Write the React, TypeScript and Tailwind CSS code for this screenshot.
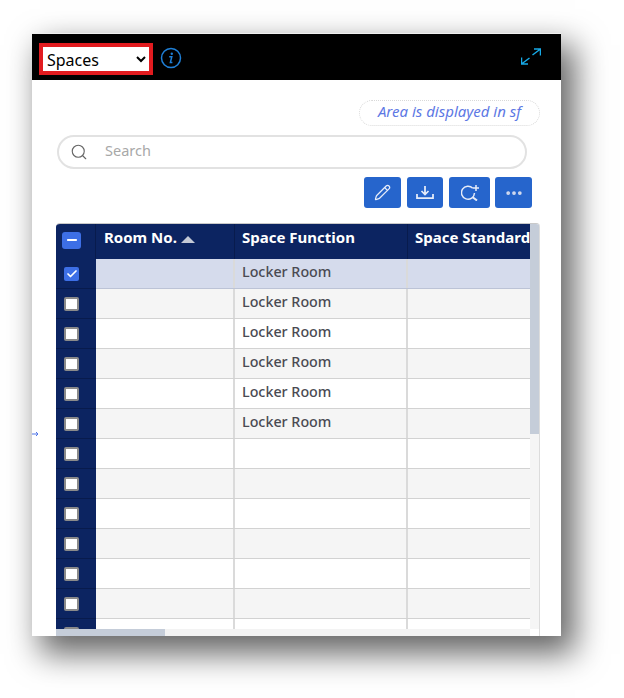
import { Pencil, MoreHorizontal, Search, Check, Minus } from "lucide-react";

const rows = ["Locker Room", "Locker Room", "Locker Room", "Locker Room", "Locker Room", "Locker Room", "", "", "", "", "", "", ""];

export default function App() {
  return (
    <div className="h-[698px] w-[624px] overflow-hidden bg-white pl-[32px] pt-[33px] font-['Noto_Sans',sans-serif]">
      <div className="relative flex h-[603px] w-[529px] flex-col border-t border-[#f0f0f0] bg-white shadow-[11px_15px_30px_3px_rgba(0,0,0,0.6)]">
        {/* Header */}
        <div className="flex h-[45.5px] shrink-0 items-start justify-between bg-black pl-[7px] pr-[20px] pt-[9px]">
          <div className="flex items-center gap-[7px]">
            <select className="h-[32px] w-[114px] border-4 border-[#e21b1f] bg-white pt-[1px] text-[16px] text-black">
              <option>Spaces</option>
            </select>
            <svg width="22" height="22" viewBox="0 0 22 22" fill="none" className="mb-[3px] text-[#1f7fd6]">
              <circle cx="11" cy="11" r="9.5" stroke="currentColor" strokeWidth="1.5" />
              <circle cx="11.8" cy="6.8" r="1.2" fill="currentColor" />
              <path d="M9.2 9.8h2.6l-1.4 5.6h2" stroke="currentColor" strokeWidth="1.5" />
            </svg>
          </div>
          <svg width="20" height="17" viewBox="0 0 20 17" fill="none" stroke="#17a9e6" strokeWidth="1.5" className="mt-[5px]">
            <path d="M19.5 1 11.5 7M13 1h6.5v6.5" />
            <path d="M0.5 16 8.5 10M0.5 9.5V16H7" />
          </svg>
        </div>

        {/* Arrow on the panel edge */}
        <svg width="7" height="6" viewBox="0 0 7 6" className="absolute left-0 top-[397px]" fill="none" stroke="#4f74e8">
          <path d="M0 3h6M4 1l2 2-2 2" />
        </svg>

        <div className="flex flex-1 flex-col overflow-hidden pl-[24px] pr-[21px]">
          {/* Units note */}
          <div className="mt-[20.5px] flex justify-end">
            <div className="flex h-[26px] w-[181px] items-center justify-center rounded-full border border-dotted border-[#d9d9d9] pb-[3px] text-[15px] italic text-[#5d78e4]">
              Area is displayed in sf
            </div>
          </div>

          {/* Search */}
          <div className="ml-[1px] mt-[9px] flex h-[34px] w-[470px] items-center rounded-full border-2 border-[#e2e2e2] pl-[11px]">
            <Search className="h-[18px] w-[18px] text-[#666666]" strokeWidth={1.5} />
            <span className="mb-[2px] ml-[17px] text-[14.5px] text-[#a8a8a8]">Search</span>
          </div>

          {/* Actions */}
          <div className="mr-[8px] mt-[8px] flex justify-end gap-[6px]">
            <button className="flex h-[31px] w-[37px] items-center justify-center rounded-[3px] bg-[#2665cc] text-[#e6ecf9]">
              <Pencil className="h-[17px] w-[17px]" strokeWidth={1.75} />
            </button>
            <button className="flex h-[31px] w-[36px] items-center justify-center rounded-[3px] bg-[#2665cc] text-[#e6ecf9]">
              <svg width="18" height="13" viewBox="0 0 18 13" fill="none" stroke="currentColor" strokeWidth="1.75">
                <path d="M9 0v8.5M5.5 5 9 8.5 12.5 5" />
                <path d="M1 8v4h16V8" />
              </svg>
            </button>
            <button className="flex h-[31px] w-[41px] items-center justify-center rounded-[3px] bg-[#2665cc] text-[#e6ecf9]">
              <svg width="18" height="16" viewBox="0 0 18 16" fill="none" stroke="currentColor" strokeWidth="1.5">
                <path d="M11.8 3.3A6.5 6.5 0 1 0 13.5 8" />
                <path d="M11.7 12.2 16 15.5" strokeWidth="2" />
                <path d="M15 0v6M12 3h6" />
              </svg>
            </button>
            <button className="-ml-px flex h-[31px] w-[37px] items-center justify-center rounded-[3px] bg-[#2665cc] text-[#d5dcef]">
              <MoreHorizontal className="h-[20px] w-[20px]" strokeWidth={2.5} />
            </button>
          </div>

          {/* Grid */}
          <div className="mt-[15px] flex h-[413px] w-[484px] overflow-hidden rounded-t-[4px] border-t border-[#c9c9c9]">
            <div className="flex w-[474px] flex-col">
              <div className="flex-1 overflow-hidden">
                <div className="flex h-[35px] bg-[#0c2461] text-[15px] font-bold text-white">
                  <div className="flex w-[40px] shrink-0 items-center border-r border-[#081b4d] pb-[3px] pl-[6px]">
                    <div className="flex h-[17px] w-[19px] items-center justify-center rounded-[3px] bg-[#3d6fe6]">
                      <Minus className="h-[14px] w-[14px]" strokeWidth={3.5} />
                    </div>
                  </div>
                  <div className="flex w-[139px] shrink-0 gap-[4px] whitespace-nowrap border-r border-[#081b4d] pl-[8px] pt-[2px]">
                    Room No.
                    <span className="mt-[10px] h-0 w-0 border-x-[7px] border-b-[7px] border-x-transparent border-b-[#c4c9d6]" />
                  </div>
                  <div className="w-[173px] shrink-0 whitespace-nowrap border-r border-[#081b4d] pl-[7px] pt-[2px]">Space Function</div>
                  <div className="flex-1 overflow-hidden whitespace-nowrap pl-[7px] pt-[2px]">Space Standard</div>
                </div>
                {rows.map((name, i) => (
                  <div
                    key={i}
                    className={`flex h-[30px] border-b text-[14.3px] text-[#4a4a52] ${
                      i === 0 ? "border-[#bcc3d6] bg-[#d5dbec]" : i % 2 === 1 ? "border-[#d2d2d2] bg-[#f5f5f5]" : "border-[#d2d2d2] bg-white"
                    }`}
                  >
                    <div className="-mb-px flex w-[40px] shrink-0 items-center border-b border-[#081b4d] bg-[#0c2461] pl-[8px]">
                      {i === 0 ? (
                        <div className="flex h-[14px] w-[15px] items-center justify-center rounded-[2px] bg-[#3d6fe6] text-white">
                          <Check className="h-[12px] w-[12px]" strokeWidth={3.5} />
                        </div>
                      ) : (
                        <div className="h-[14px] w-[15px] rounded-[2px] border-2 border-[#8a8a8a] bg-white" />
                      )}
                    </div>
                    <div className="w-[139px] shrink-0 border-r-2 border-[#dadada]" />
                    <div className="flex w-[173px] shrink-0 items-center border-r-2 border-[#dadada] pb-[4px] pl-[7px] font-medium">{name}</div>
                    <div className="flex-1" />
                  </div>
                ))}
              </div>
              {/* Horizontal scrollbar */}
              <div className="h-[7px] shrink-0 bg-[#f3f3f3]">
                <div className="h-full w-[109px] bg-[#c5cdd9]" />
              </div>
            </div>
            {/* Vertical scrollbar */}
            <div className="flex w-[10px] shrink-0 flex-col border-r border-[#dcdcdc]">
              <div className="h-[210px] bg-[#c5cdd9]" />
              <div className="flex-1 bg-[#f5f5f5]" />
              <div className="h-[7px] bg-white" />
            </div>
          </div>
        </div>
      </div>
    </div>
  );
}
